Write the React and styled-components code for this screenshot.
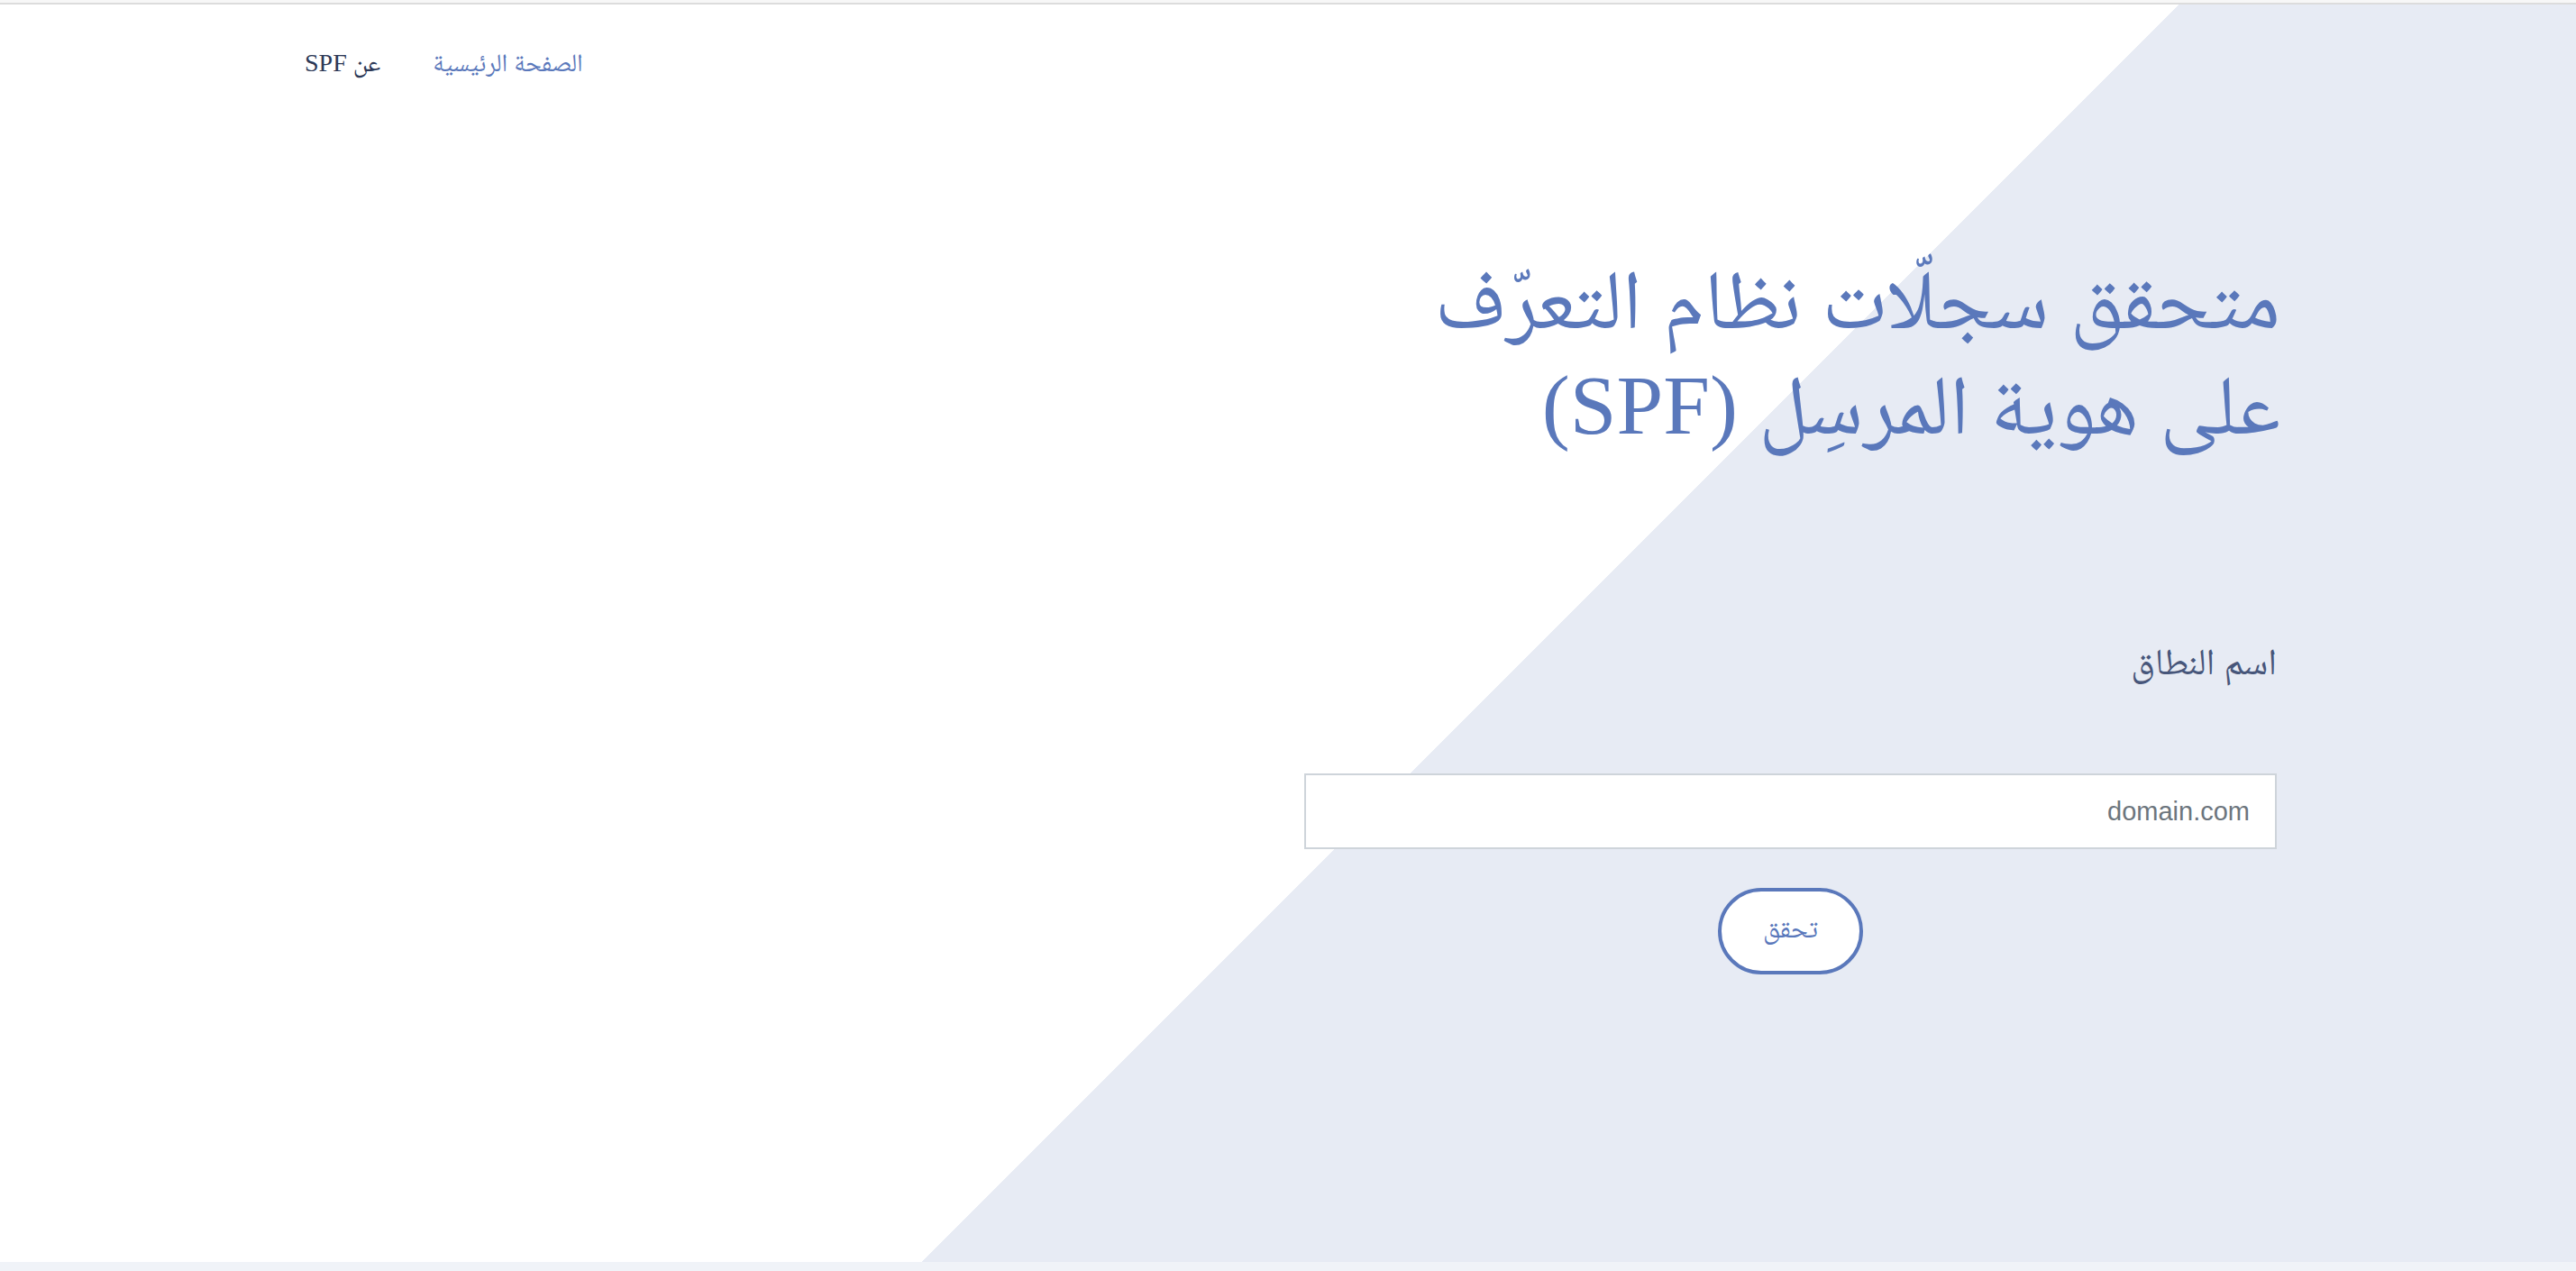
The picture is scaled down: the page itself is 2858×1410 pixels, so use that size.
import React from "react";
import styled, { createGlobalStyle } from "styled-components";

// ====================== Global ======================
const GlobalStyle = createGlobalStyle`
  html, body {
    margin: 0;
    padding: 0;
    background: #fff;
  }
  body {
    font-family: "Liberation Serif", "Noto Naskh Arabic", "Noto Sans Arabic", "DejaVu Sans", serif;
  }
  * { box-sizing: border-box; }
`;

// ====================== Styled Components ======================
const Page = styled.div`
  direction: rtl;
  width: 100%;
  min-height: 1410px;
  display: flex;
  flex-direction: column;
`;

const TopEdge = styled.div`
  height: 5px;
  background: #f7f7f7;
  border-bottom: 2px solid #dcdcdc;
`;

const Hero = styled.section`
  height: 1395px;
  /* diagonal split: white on the left, pale blue on the right */
  background: linear-gradient(135deg, #ffffff 56.85%, #e7ebf4 56.85%);
`;

const BottomEdge = styled.div`
  height: 10px;
  background: #f0f3f8;
`;

const Container = styled.div`
  width: 2188px;
  margin: 0 332px 0 auto;
`;

const Navbar = styled.nav`
  display: flex;
  justify-content: flex-end;
  padding-top: 44px;
`;

const NavLinks = styled.ul`
  display: flex;
  gap: 58px;
  list-style: none;
  margin: 0;
  padding: 0;
`;

const NavItem = styled.li`
  font-size: 28px;
  line-height: 42px;
  color: ${(p) => (p.$active ? "#5a78bb" : "#2c3856")};
  cursor: pointer;
`;

const Row = styled.div`
  display: flex;
  padding-top: 183px;
`;

const Col = styled.div`
  width: calc(50% - 15px);
  display: flex;
  flex-direction: column;
`;

const Title = styled.h1`
  margin: 0 -4px 0 0;
  font-size: 93px;
  font-weight: 400;
  line-height: 117px;
  color: #5a78bb;
  white-space: nowrap;
`;

const Form = styled.form`
  display: flex;
  flex-direction: column;
  margin-top: 200px;
`;

const Label = styled.label`
  font-size: 41px;
  line-height: 52px;
  color: #47567a;
`;

const Input = styled.input`
  margin-top: 98px;
  height: 84px;
  padding: 0 28px;
  border: 2px solid #ced4da;
  border-radius: 0;
  background: #fff;
  font-family: "Liberation Sans", Arial, sans-serif;
  font-size: 29px;
  color: #495057;
  outline: none;

  &::placeholder {
    color: #6c757d;
  }
`;

const Button = styled.button`
  align-self: center;
  margin-top: 43px;
  padding: 0 46px;
  height: 96px;
  border: 4px solid #5a78bb;
  border-radius: 48px;
  background: #fff;
  color: #5a78bb;
  font-family: inherit;
  font-size: 30px;
  cursor: pointer;
`;

// ====================== Component ======================
const App = () => {
  return (
    <>
      <GlobalStyle />
      <Page>
        <TopEdge />
        <Hero>
          <Container>
            <Navbar>
              <NavLinks>
                <NavItem $active>الصفحة الرئيسية</NavItem>
                <NavItem>عن SPF</NavItem>
              </NavLinks>
            </Navbar>
            <Row>
              <Col>
                <Title>
                  متحقق سجلّات نظام التعرّف
                  <br />
                  على هوية المرسِل (SPF)
                </Title>
                <Form onSubmit={(e) => e.preventDefault()}>
                  <Label htmlFor="domain">اسم النطاق</Label>
                  <Input id="domain" type="text" placeholder="domain.com" />
                  <Button type="submit">تحقق</Button>
                </Form>
              </Col>
            </Row>
          </Container>
        </Hero>
        <BottomEdge />
      </Page>
    </>
  );
};

export default App;
